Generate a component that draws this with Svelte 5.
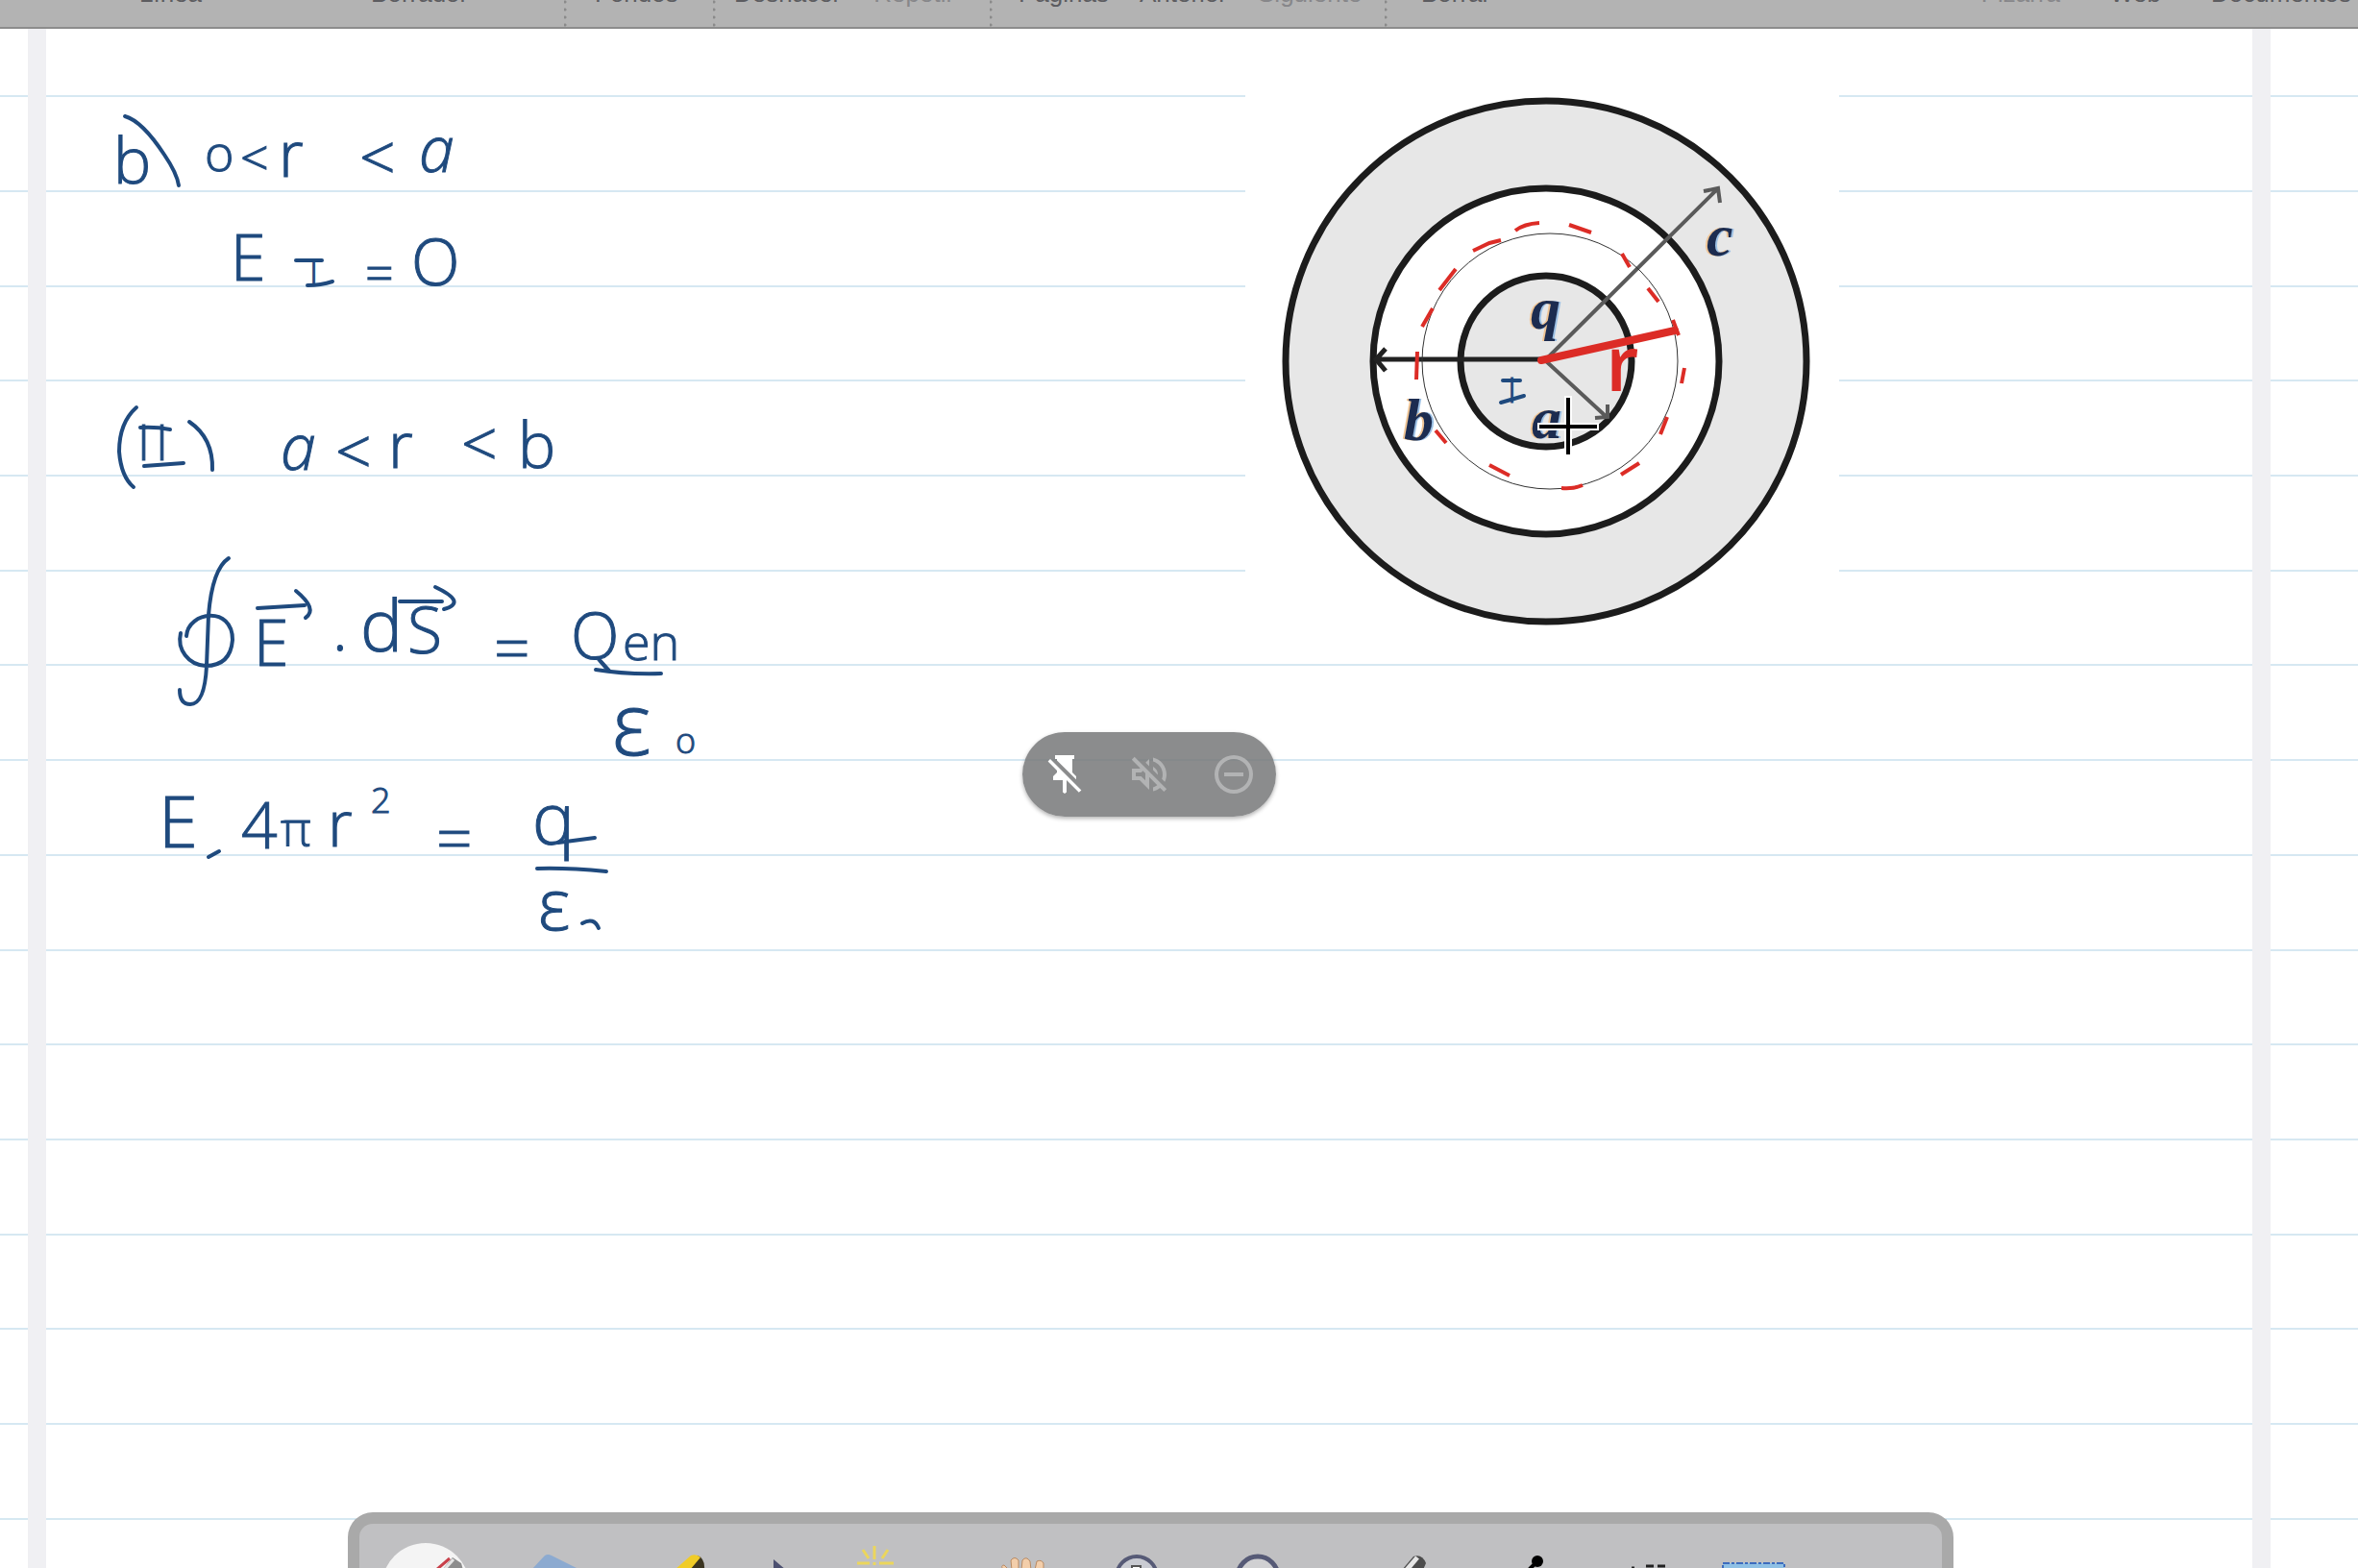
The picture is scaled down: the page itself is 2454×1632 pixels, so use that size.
<script>
  const menuGroups = [
    { id: 'strokes', items: [{ label: 'Línea' }, { label: 'Borrador' }] },
    { id: 'paper', items: [{ label: 'Fondos' }] },
    { id: 'history', items: [{ label: 'Deshacer' }, { label: 'Repetir', off: true }] },
    { id: 'pages', items: [{ label: 'Páginas' }, { label: 'Anterior' }, { label: 'Siguiente', off: true }] },
    { id: 'tools', items: [{ label: 'Borrar' }] },
    { id: 'modes', items: [{ label: 'Pizarra', off: true }, { label: 'Web' }, { label: 'Documentos' }] }
  ];

  const rows = Array.from({ length: 16 });

  // Board notes: character, x, baseline, size class, optional style class
  const notes = [
    ['b', 118, 191, 'l'], ['o', 213, 178, 'm'], ['<', 250, 183, 'm'], ['r', 290, 184, 'l'],
    ['<', 374, 188, 'l'], ['a', 436, 179, 'l', 'slant'],
    ['E', 240, 292, 'l'], ['I', 322, 296, 's'], ['=', 380, 303, 'm'], ['O', 428, 297, 'l'],
    ['I', 143, 479, 'm'], ['I', 162, 479, 'm'], ['a', 292, 489, 'l', 'slant'], ['<', 349, 494, 'l'],
    ['r', 404, 487, 'l'], ['<', 480, 486, 'l'], ['b', 539, 487, 'l'],
    ['E', 264, 693, 'l'], ['.', 346, 677, 'l'], ['d', 375, 678, 'xl'], ['S', 424, 680, 'l'],
    ['=', 514, 698, 'l'], ['Q', 594, 686, 'l'], ['en', 648, 687, 'm'],
    ['ε', 637, 786, 'xxl'], ['o', 703, 784, 's'],
    ['E', 165, 882, 'xl'], ['4', 251, 883, 'l'], ['π', 292, 881, 'm'], ['r', 341, 881, 'l'],
    ['2', 386, 846, 's'], ['=', 454, 896, 'l'], ['q', 554, 879, 'xl'], ['ε', 560, 968, 'xl']
  ];

  // Parentheses, vector arrows, rules and the contour sign
  const marks = [
    'M130 121Q148 126 171 161Q184 180 186 193',
    'M308 271H335', 'M320 297Q334 297 346 293',
    'M142 424Q124 440 124 470Q126 496 139 507',
    'M197 439Q222 456 221 489',
    'M146 445Q162 444 177 447', 'M150 485L191 482',
    'M228 581Q217 592 215 603Q210 620 209 640',
    'M268 633L317 630M308 615Q331 634 318 643',
    'M416 626H460M453 611Q487 627 462 634',
    'M620 697Q650 702 688 701',
    'M217 892L228 886',
    'M581 877L619 872', 'M559 904Q590 903 631 907',
    'M606 961Q618 954 623 966'
  ];
  marks[7] = 'M238 581Q221 592 217 640L215 693Q213 733 198 733Q187 733 187 718M194 662C196 636 242 630 242 666C240 690 224 693 214 693C196 692 184 676 188 659';

  const dashes = [
    'M1577 240Q1586 233 1602 232', 'M1633 234L1656 242', 'M1533 261L1550 253L1562 250',
    'M1498 302L1515 280', 'M1480 340L1491 321', 'M1475 366L1474 395', 'M1494 448L1505 461',
    'M1550 484L1571 495', 'M1625 508Q1638 509 1647 505', 'M1687 494L1706 482',
    'M1728 452L1735 434', 'M1750 399L1753 383', 'M1741 333L1747 349', 'M1715 300L1726 314',
    'M1688 264L1696 278'
  ];

  const dock = ['Lápiz', 'Goma', 'Marcador', 'Seleccionar', 'Láser', 'Mover', 'Acercar', 'Alejar', 'Pluma', 'Recta', 'Texto', 'Capturar'];
</script>

<div class="app">
  <header>
    {#each menuGroups as group}
      <nav class={group.id} aria-label={group.id}>
        {#each group.items as item}
          <button type="button" disabled={item.off}>{item.label}</button>
        {/each}
      </nav>
    {/each}
  </header>

  <main>
    <div class="rules">
      {#each rows as _}<i></i>{/each}
    </div>
    <div class="margins"><i></i><i></i></div>

    <svg class="board" viewBox="0 30 2454 1602" preserveAspectRatio="xMinYMin slice">
      <rect x="1296" y="90" width="618" height="570" fill="#fff" />
      <g class="rings">
        <circle cx="1609" cy="376" r="271" />
        <circle cx="1609" cy="376" r="180" class="hollow" />
        <circle cx="1609" cy="376" r="89" />
      </g>
      <g class="radii">
        <path d="M1608 375L1787 197M1773 199L1788 196L1790 211" />
        <path d="M1608 375L1672 434M1673 421V434L1660 435" />
        <path class="dark" d="M1607 374H1432M1442 363L1432 374L1442 386" />
      </g>
      <g class="labels">
        <text x="1593" y="342">q</text>
        <text x="1461" y="458">b</text>
        <text x="1594" y="456">a</text>
        <text x="1776" y="266">c</text>
      </g>
      <circle class="gauss" cx="1613" cy="376" r="133" />
      <g class="red">
        {#each dashes as d}<path {d} />{/each}
        <path class="radius" d="M1604 375L1743 344" />
        <text x="1671" y="407">r</text>
      </g>
      <g class="ink">
        {#each notes as [ch, x, y, size, style]}
          <text {x} {y} class="{size} {style ?? ''}">{ch}</text>
        {/each}
        {#each marks as d}<path {d} />{/each}
        <text x="1569" y="419" class="s">I</text>
        <path d="M1564 396H1582M1562 419L1586 412" />
      </g>
      <g class="cross">
        <path class="halo" d="M1600 444H1664M1632 412V475" />
        <path d="M1602 444H1662M1632 414V473" />
      </g>
    </svg>

    <div class="pill">
      <button type="button" class="on" aria-label="Desanclar">
        <svg viewBox="0 0 24 24"><path d="M3.3 5.3L4.5 4L20.7 20.2L19.4 21.4L13 15V21.2L12 22L11 21.2V15H6V13L8 11V10L3.3 5.3ZM16 11L18 13V14.600L8 4.800V4H7V2H17V4H16V11Z" /></svg>
      </button>
      <button type="button" aria-label="Silenciar">
        <svg viewBox="0 0 24 24"><path d="M4.340 2.930L2.930 4.340 7.290 8.700 7 9H3v6h4l5 5v-6.590l4.180 4.180c-.65.49-1.380.88-2.180 1.110v2.060c1.340-.3 2.570-.92 3.610-1.750l2.050 2.050 1.410-1.410L4.340 2.930zM10 15.170L7.830 13H5v-2h2.830l.88-.88L10 11.410v3.760zM19 12c0 .82-.15 1.610-.41 2.340l1.530 1.530c.56-1.170.88-2.480.88-3.870 0-4.280-2.990-7.860-7-8.770v2.060c2.890.86 5 3.540 5 6.710zm-7-8l-1.880 1.880L12 7.760zm4.500 8c0-1.770-1.020-3.290-2.500-4.030v1.790l2.480 2.480c.01-.08.02-.16.02-.24z" /></svg>
      </button>
      <button type="button" aria-label="Quitar">
        <svg viewBox="0 0 24 24"><path fill-rule="evenodd" d="M12 2a10 10 0 1 0 0 20a10 10 0 1 0 0-20zM12 4a8 8 0 1 1 0 16a8 8 0 1 1 0-16zM7 11h10v2H7z" /></svg>
      </button>
    </div>

    <div class="dock">
      {#each dock as name, k}
        <button type="button" aria-label={name}>
          <svg viewBox="{381 + 124 * k} 1586 124 46">
            {#if k === 0}
              <circle cx="443" cy="1652" r="46" fill="#f4f4f4" />
              <path d="M454 1634L468 1622" stroke="#c8404a" stroke-width="3" />
              <path d="M460 1634L471 1621L480 1627L482 1634Z" fill="#8d8d8d" />
              <path d="M463 1633L472 1623" stroke="#e4e4e4" stroke-width="3" />
            {:else if k === 1}
              <path d="M553 1634L567 1619Q570 1617 574 1619L604 1634Z" fill="#8caad0" />
            {:else if k === 2}
              <path d="M712 1634L726 1619Q734 1622 733 1634Z" fill="#3b3521" />
              <path d="M702 1634L719 1619Q725 1617 729 1621L718 1634Z" fill="#f0cc28" />
            {:else if k === 3}
              <path d="M805 1623V1634H818Z" fill="#4c5070" />
            {:else if k === 4}
              <path d="M910 1609V1623M892 1627H905M915 1627H930M898 1613L904 1622M924 1613L918 1622M910 1626V1629" stroke="#ebd65c" stroke-width="3" />
            {:else if k === 5}
              <g stroke="#b98a63" fill="#f3ceaa">
                <path d="M1044 1634Q1041 1629 1045 1629L1050 1634ZM1053 1634L1052 1624Q1056 1619 1060 1624V1634ZM1063 1634L1064 1624Q1068 1619 1072 1625L1073 1634ZM1077 1634L1079 1625Q1084 1623 1086 1627V1634Z" />
              </g>
            {:else if k === 6}
              <circle cx="1183" cy="1641" r="21" fill="#c9cbd2" stroke="#565a76" stroke-width="4" />
              <path d="M1178 1634V1630H1187V1634" fill="#fff" stroke="#555" stroke-width="2" />
            {:else if k === 7}
              <circle cx="1309" cy="1641" r="21" fill="#d0d0d2" stroke="#565a76" stroke-width="5" />
            {:else if k === 8}
              <path d="M1459 1634L1471 1620Q1480 1617 1484 1627L1481 1634Z" fill="#4c4c4c" />
              <path d="M1464 1634L1475 1621" stroke="#e6e6e6" stroke-width="5" />
            {:else if k === 9}
              <circle cx="1600" cy="1625" r="6" />
              <path d="M1591 1634L1600 1625" stroke="#000" stroke-width="4" />
            {:else if k === 10}
              <path d="M1713 1630H1721M1725 1630H1733M1698 1632H1701" stroke="#222" stroke-width="3" />
            {:else}
              <rect x="1793" y="1627" width="64" height="20" fill="#8fc0e4" stroke="#3d6cbe" stroke-width="2" stroke-dasharray="7 2 3 2" />
            {/if}
          </svg>
        </button>
      {/each}
    </div>
  </main>
</div>

<style>
  :global(body) {
    margin: 0;
    overflow: hidden;
  }
  .app {
    display: flex;
    flex-direction: column;
    height: 100vh;
    background: #fff;
    font-family: "Liberation Sans", Arial, sans-serif;
  }
  button {
    border: 0;
    padding: 0;
    background: none;
    font: inherit;
    color: inherit;
  }
  header {
    display: flex;
    flex: none;
    height: 28px;
    overflow: hidden;
    background: #b3b3b3;
    border-bottom: 2px solid #8c8c8c;
    font-size: 26px;
    line-height: 26px;
    color: #5c5c60;
  }
  nav {
    box-sizing: border-box;
    display: flex;
    align-items: flex-end;
    padding-bottom: 22px;
    background: radial-gradient(circle at 1px 2px, #8a8a8a 1px, transparent 2px) 0 0 / 4px 8px repeat-y;
  }
  nav button:disabled {
    color: #87878a;
  }
  .strokes {
    width: 587px;
    padding-left: 145px;
    gap: 176px;
    background: none;
  }
  .paper {
    width: 155px;
    padding-left: 32px;
  }
  .history {
    width: 288px;
    padding-left: 22px;
    gap: 34px;
  }
  .pages {
    width: 411px;
    padding-left: 30px;
    gap: 32px;
  }
  .tools {
    padding-left: 38px;
  }
  .modes {
    margin-left: auto;
    padding-right: 7px;
    gap: 52px;
    background: none;
  }
  main {
    position: relative;
    flex: 1;
    min-height: 0;
    display: grid;
    grid-template: minmax(0, 1fr) / minmax(0, 1fr);
    overflow: hidden;
  }
  main > * {
    grid-area: 1 / 1;
  }
  .rules {
    display: flex;
    flex-direction: column;
    padding: 21px 0 2px;
  }
  .rules i {
    flex: 1;
    background: linear-gradient(#d6e8f2, #d6e8f2) center / 100% 2px no-repeat;
  }
  .margins {
    display: flex;
    justify-content: space-between;
    padding: 0 91px 0 29px;
  }
  .margins i {
    width: 19px;
    background: #f0f0f3;
  }
  .board {
    width: 100%;
    height: 100%;
    fill: none;
  }
  .rings circle {
    fill: #e7e7e7;
    stroke: #1c1c1c;
    stroke-width: 7;
  }
  .rings .hollow {
    fill: #fff;
  }
  .radii path {
    stroke: #5a5a5a;
    stroke-width: 4;
  }
  .radii .dark {
    stroke: #222;
    stroke-width: 5;
  }
  .gauss {
    stroke: #333;
    stroke-width: 1;
  }
  .labels text {
    font: italic bold 62px "Liberation Serif", serif;
    fill: #1c2c50;
    filter: drop-shadow(-2px 0 0 #efc596) drop-shadow(2px 0 0 #9cc0e4);
  }
  .red path {
    stroke: #dc2c26;
    stroke-width: 4;
  }
  .red .radius {
    stroke-width: 8;
    stroke-linecap: round;
  }
  .red text {
    font: 600 80px "Open Sans", sans-serif;
    fill: #dc2c26;
  }
  .ink text {
    font-family: "Open Sans", sans-serif;
    font-weight: 300;
    fill: #1f4a7e;
    stroke: #1f4a7e;
    stroke-width: 1;
  }
  .ink path {
    stroke: #1f4a7e;
    stroke-width: 4;
    stroke-linecap: round;
    stroke-linejoin: round;
  }
  .ink .slant {
    font-style: italic;
  }
  .s {
    font-size: 36px;
  }
  .m {
    font-size: 52px;
  }
  .l {
    font-size: 66px;
  }
  .xl {
    font-size: 74px;
  }
  .xxl {
    font-size: 90px;
  }
  .cross path {
    stroke: #000;
    stroke-width: 4;
  }
  .cross .halo {
    stroke: #fff;
    stroke-width: 8;
  }
  .pill {
    position: absolute;
    left: 1064px;
    top: 732px;
    display: flex;
    border-radius: 44px;
    background: rgba(120, 121, 122, 0.86);
    box-shadow: 0 2px 4px rgba(0, 0, 0, 0.3);
    color: #b2b3b4;
  }
  .pill button {
    display: flex;
    align-items: center;
    justify-content: center;
    width: 88px;
    height: 88px;
  }
  .pill .on {
    color: #fff;
  }
  .pill svg {
    width: 48px;
    height: 48px;
    fill: currentColor;
  }
  .dock {
    position: relative;
    align-self: end;
    display: flex;
    height: 46px;
    margin: 0 421px 0 362px;
    padding-left: 7px;
    border: 12px solid #a9a9a9;
    border-bottom: 0;
    border-radius: 26px 26px 0 0;
    background: #c0c0c2;
  }
  .dock button {
    width: 124px;
    height: 46px;
  }
  .dock svg {
    display: block;
    width: 124px;
    height: 46px;
  }
</style>
